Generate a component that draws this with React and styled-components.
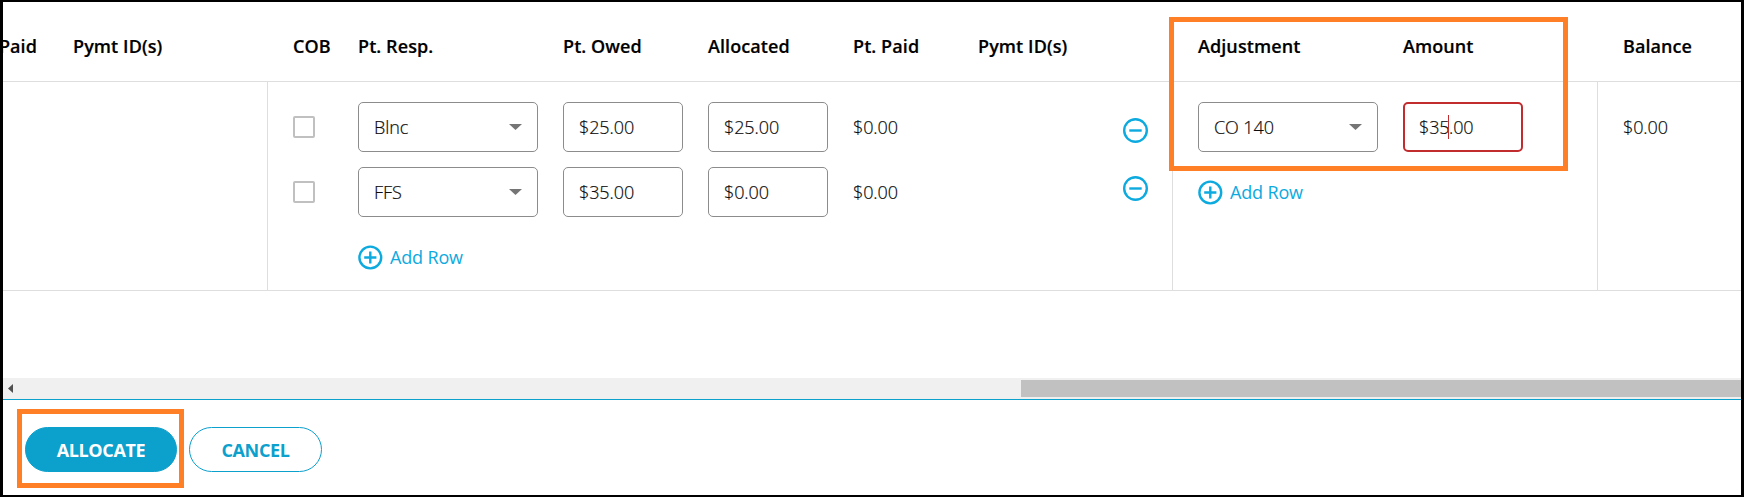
import React from "react";
import styled, { createGlobalStyle } from "styled-components";

const GlobalStyle = createGlobalStyle`
  *, *::before, *::after { box-sizing: border-box; }
  body { margin: 0; background: #fff; }
`;

const Frame = styled.div`
  position: relative;
  display: flex;
  flex-direction: column;
  width: 1744px;
  height: 497px;
  border: solid #000;
  border-width: 2px 3px;
  background: #fff;
  color: #0c0c0c;
  font-family: "Open Sans", "Noto Sans", sans-serif;
  font-size: 18px;
  line-height: 24px;
  font-weight: 300;
  letter-spacing: -0.1px;
  overflow: hidden;
`;

const columns = "264px 905px 425px 144px";

const HeaderRow = styled.div`
  display: grid;
  grid-template-columns: ${columns};
  height: 80px;
  border-bottom: 1px solid #dedede;
`;

const HeaderGroup = styled.div`
  display: grid;
  grid-template-columns: ${(p) => p.$tracks};
  column-gap: 25px;
  align-items: center;
  padding-top: 9px;
  padding-left: ${(p) => (p.$flush ? 0 : 26)}px;
  color: #000;
  font-weight: 600;
  letter-spacing: 0.08px;
  -webkit-text-stroke: 0.2px currentColor;
  white-space: nowrap;
`;

const ClippedLabel = styled.span`
  display: flex;
  justify-content: flex-end;
  overflow: hidden;
`;

const PymtLabel = styled.span`
  padding-left: 11px;
`;

const BodyRow = styled.div`
  display: grid;
  grid-template-columns: ${columns};
  height: 209px;
  border-bottom: 1px solid #dedede;
  -webkit-text-stroke: 0.2px currentColor;
`;

const Group = styled.div`
  display: flex;
  justify-content: space-between;
  padding: 20px 24px 0 25px;
  border-left: 1px solid ${(p) => (p.$plain ? "transparent" : "#dedede")};
`;

const Lines = styled.div`
  display: flex;
  flex-direction: column;
  gap: 15px;
`;

const Line = styled.div`
  display: grid;
  grid-template-columns: ${(p) => p.$tracks};
  column-gap: 25px;
  align-items: center;
  height: 50px;
`;

const Checkbox = styled.span`
  width: 22px;
  height: 22px;
  border: 2px solid #c0c0c0;
  border-radius: 2px;
`;

const Field = styled.div`
  display: flex;
  align-items: center;
  justify-content: space-between;
  height: 50px;
  padding: 0 ${(p) => (p.$invalid ? 14 : 15)}px;
  border: ${(p) => (p.$invalid ? "2px solid #c12c2f" : "1px solid #8c8c8c")};
  border-radius: 5px;
`;

const Editing = styled.span`
  display: flex;
  align-items: center;
`;

const BeforeCaret = styled.span`
  width: 29px;
`;

const Caret = styled.span`
  width: 1px;
  height: 24px;
  background: #c12c2f;
`;

const Arrow = styled.svg`
  width: 13px;
  height: 6px;
  fill: #757575;
`;

const AddLink = styled.div`
  display: flex;
  align-items: center;
  gap: 7px;
  grid-column: ${(p) => p.$column || 1} / span 2;
  color: #0caadf;
  font-weight: 400;
  letter-spacing: -0.15px;
  -webkit-text-stroke: 0;
`;

const Icon = styled.svg`
  display: block;
  width: ${(p) => p.$size}px;
  height: ${(p) => p.$size}px;
  fill: none;
  stroke: #0caadf;
  stroke-width: 2.4;
`;

const RemoveColumn = styled.div`
  display: flex;
  flex-direction: column;
  gap: 33px;
  padding-top: 16px;
`;

const Spacer = styled.div`
  flex: 1;
`;

const Scrollbar = styled.div`
  display: flex;
  align-items: center;
  justify-content: space-between;
  height: 21px;
  padding-left: 5px;
  background: #f0f0f0;
`;

const ScrollArrow = styled.svg`
  width: 5px;
  height: 9px;
  fill: #505050;
`;

const Thumb = styled.div`
  width: 720px;
  height: 17px;
  background: #c1c1c1;
`;

const Footer = styled.div`
  display: flex;
  align-items: flex-start;
  gap: 12px;
  height: 96px;
  padding: 27px 0 0 22px;
  border-top: 1px solid #0ca0cd;
`;

const Button = styled.button`
  width: ${(p) => p.$width}px;
  height: 45px;
  padding: 0;
  border: 1px solid #0ca0cd;
  border-radius: 23px;
  background: ${(p) => (p.$primary ? "#0ca0cd" : "#fff")};
  color: ${(p) => (p.$primary ? "#fff" : "#0ca0cd")};
  font: inherit;
  font-weight: 700;
  letter-spacing: -0.35px;
`;

const Highlight = styled.div`
  position: absolute;
  left: ${(p) => p.$x}px;
  top: ${(p) => p.$y}px;
  width: ${(p) => p.$w}px;
  height: ${(p) => p.$h}px;
  border: 5px solid #ff7f27;
  pointer-events: none;
`;

const patientTracks = "40px 180px 120px 120px 100px";
const adjustTracks = "180px 120px";

const PlusIcon = () => (
  <Icon $size={25} viewBox="0 0 25 25">
    <circle cx="12.3" cy="12.5" r="10.9" />
    <path d="M12.3 6.4v12.2M6.2 12.5h12.2" />
  </Icon>
);

const MinusIcon = () => (
  <Icon $size={25} viewBox="0 0 25 25">
    <circle cx="12.5" cy="12.5" r="11.3" />
    <path d="M6.3 12.5h12.4" />
  </Icon>
);

const Select = ({ value }) => (
  <Field>
    {value}
    <Arrow viewBox="0 0 13 6">
      <path d="M0 0h13L6.5 6z" />
    </Arrow>
  </Field>
);

const AddRow = ({ column }) => (
  <AddLink $column={column}>
    <PlusIcon />
    Add Row
  </AddLink>
);

const patientRows = [
  { resp: "Blnc", owed: "$25.00", allocated: "$25.00", paid: "$0.00" },
  { resp: "FFS", owed: "$35.00", allocated: "$0.00", paid: "$0.00" },
];

export default function App() {
  return (
    <>
      <GlobalStyle />
      <Frame>
        <HeaderRow>
          <HeaderGroup $flush $tracks="34px 1fr">
            <ClippedLabel>Paid</ClippedLabel>
            <PymtLabel>Pymt ID(s)</PymtLabel>
          </HeaderGroup>
          <HeaderGroup $tracks={`${patientTracks} 1fr`}>
            <span>COB</span>
            <span>Pt. Resp.</span>
            <span>Pt. Owed</span>
            <span>Allocated</span>
            <span>Pt. Paid</span>
            <span>Pymt ID(s)</span>
          </HeaderGroup>
          <HeaderGroup $tracks={adjustTracks}>
            <span>Adjustment</span>
            <span>Amount</span>
          </HeaderGroup>
          <HeaderGroup $tracks="1fr">
            <span>Balance</span>
          </HeaderGroup>
        </HeaderRow>
        <BodyRow>
          <Group $plain />
          <Group>
            <Lines>
              {patientRows.map((row) => (
                <Line key={row.resp} $tracks={patientTracks}>
                  <Checkbox />
                  <Select value={row.resp} />
                  <Field>{row.owed}</Field>
                  <Field>{row.allocated}</Field>
                  <span>{row.paid}</span>
                </Line>
              ))}
              <Line $tracks={patientTracks}>
                <AddRow column={2} />
              </Line>
            </Lines>
            <RemoveColumn>
              <MinusIcon />
              <MinusIcon />
            </RemoveColumn>
          </Group>
          <Group>
            <Lines>
              <Line $tracks={adjustTracks}>
                <Select value="CO 140" />
                <Field $invalid>
                  <Editing>
                    <BeforeCaret>$35</BeforeCaret>
                    <Caret />
                    <span>.00</span>
                  </Editing>
                </Field>
              </Line>
              <Line $tracks={adjustTracks}>
                <AddRow />
              </Line>
            </Lines>
          </Group>
          <Group>
            <Lines>
              <Line $tracks="1fr">
                <span>$0.00</span>
              </Line>
            </Lines>
          </Group>
        </BodyRow>
        <Spacer />
        <Scrollbar>
          <ScrollArrow viewBox="0 0 5 9">
            <path d="M5 0v9L0 4.5z" />
          </ScrollArrow>
          <Thumb />
        </Scrollbar>
        <Footer>
          <Button $primary $width={152}>ALLOCATE</Button>
          <Button $width={133}>CANCEL</Button>
        </Footer>
        <Highlight $x={1166} $y={15} $w={399} $h={154} />
        <Highlight $x={14} $y={407} $w={167} $h={79} />
      </Frame>
    </>
  );
}
